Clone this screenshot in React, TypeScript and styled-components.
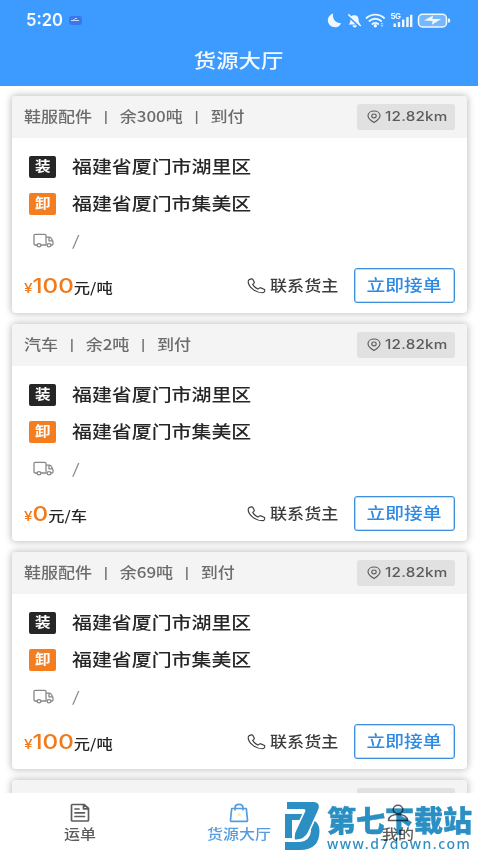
import React from "react";
import styled, { createGlobalStyle } from "styled-components";

const GlobalStyle = createGlobalStyle`
  * { box-sizing: border-box; }
  body { margin: 0; background: #fff; font-family: "Noto Sans CJK SC", sans-serif; }
`;

const Screen = styled.div`
  position: relative;
  width: 478px;
  height: 850px;
  overflow: hidden;
  display: flex;
  flex-direction: column;
  background: #fff;
`;

const Wide = styled.span<{ $size: number; $x?: number; $weight?: number; $origin?: string; $space?: number }>`
  display: inline-block;
  white-space: nowrap;
  font-size: ${(p) => p.$size}px;
  font-weight: ${(p) => p.$weight ?? 400};
  line-height: 1;
  letter-spacing: ${(p) => p.$space ?? 0}px;
  transform: scaleX(${(p) => p.$x ?? 1.15});
  transform-origin: ${(p) => p.$origin ?? "left"} center;
`;

const Header = styled.header`
  flex: none;
  height: 86px;
  background: #3d9aff;
  color: #f4faff;
`;
const StatusBar = styled.div`
  height: 39px;
  padding: 0 27px 0 26px;
  display: flex;
  align-items: center;
  justify-content: space-between;
`;
const Clock = styled.div`
  display: flex;
  align-items: center;
  gap: 4px;
  font-family: Inter, sans-serif;
`;
const UsbChip = styled.span`
  width: 13px;
  height: 9px;
  margin-top: 1px;
  border-radius: 3px;
  background: #3b76ec;
  display: flex;
  svg { display: block; }
`;
const Title = styled.h1`
  margin: 0;
  height: 42px;
  display: flex;
  align-items: center;
  justify-content: center;
`;

const List = styled.main`
  flex: 1;
  min-height: 0;
  overflow: hidden;
  padding: 10px 11px 0 12px;
  display: flex;
  flex-direction: column;
  gap: 11px;
`;
const Card = styled.article`
  flex: none;
  height: 217px;
  border-radius: 4px;
  background: #fff;
  box-shadow: 0 0 7px 1px rgba(0, 0, 0, 0.25);
`;
const CardHead = styled.div`
  height: 42px;
  padding: 0 12px;
  border-radius: 4px 4px 0 0;
  background: #f4f4f4;
  color: #6c6c6c;
  display: flex;
  align-items: center;
  justify-content: space-between;
  > span { margin-top: -1px; }
`;
const Divider = styled.i`
  display: inline-block;
  width: 24px;
  text-align: center;
  font: 600 13px/1 "Noto Sans", sans-serif;
  vertical-align: 1px;
  &::before { content: "|"; }
`;
const Distance = styled.div`
  width: 98px;
  height: 26px;
  padding-left: 10px;
  border-radius: 3px;
  background: #e1e1e1;
  color: #5c5c5c;
  display: flex;
  align-items: center;
  gap: 4px;
  font-family: Inter, sans-serif;
`;
const Stops = styled.div`
  padding: 10px 0 0 17px;
`;
const Stop = styled.div`
  height: 37px;
  display: flex;
  align-items: center;
  gap: 16px;
  color: #262626;
  > span:last-child { margin-top: -2px; }
`;
const Badge = styled.span<{ $color: string }>`
  width: 27px;
  height: 22px;
  border-radius: 2px;
  background: ${(p) => p.$color};
  color: #fff;
  display: flex;
  align-items: center;
  justify-content: center;
  padding-bottom: 1px;
`;
const Vehicle = styled(Stop)`
  padding-left: 4px;
  gap: 18px;
  color: #888;
`;
const Foot = styled.div`
  height: 35px;
  margin-top: 9px;
  padding: 0 12px;
  display: flex;
  align-items: center;
`;
const Price = styled.div`
  flex: 1;
  white-space: nowrap;
  color: #f07a1c;
  small { font: 500 13px Inter, sans-serif; }
  b { font: 500 20.5px Inter, sans-serif; }
  em { font-style: normal; font-size: 13.8px; font-weight: 500; color: #262626; }
`;
const Contact = styled.div`
  width: 107px;
  display: flex;
  align-items: center;
  gap: 4px;
  color: #3c3c3c;
  > span { margin-top: -2px; }
`;
const Accept = styled.button`
  width: 101px;
  height: 35px;
  padding: 0;
  border: 1.5px solid #3d8fdc;
  border-radius: 3px;
  box-shadow: inset 0 0 0 0.6px #8dbdea;
  background: #fff;
  color: #2f8ae2;
  font-family: inherit;
`;

const TabBar = styled.nav`
  flex: none;
  height: 57px;
  background: #fff;
  display: grid;
  grid-template-columns: repeat(3, 1fr);
`;
const Tab = styled.div<{ $active?: boolean }>`
  padding-top: 10px;
  display: flex;
  flex-direction: column;
  align-items: center;
  gap: 3px;
  color: ${(p) => (p.$active ? "#559bdf" : "#5c5c5c")};
  svg { display: block; }
`;

const Watermark = styled.div`
  position: absolute;
  left: 285px;
  top: 802px;
  display: flex;
  gap: 7px;
  color: #2b8fc3;
  mix-blend-mode: multiply;
`;
const SiteText = styled.div`
  width: 145px;
  display: flex;
  flex-direction: column;
`;
const SiteName = styled.div`
  height: 36px;
  line-height: 34px;
  font-size: 29px;
  font-weight: 900;
  white-space: nowrap;
  -webkit-text-stroke: 0.4px currentColor;
`;
const SiteUrl = styled.div`
  font: 500 14px/12px "Noto Sans", sans-serif;
  letter-spacing: 1.5px;
  white-space: nowrap;
`;

const StatusIcons = () => (
  <svg width="125" height="18" viewBox="0 0 125 18" fill="#eef8ff">
    <path d="M7.300 2.500a7 7 0 1 0 8 9.600A7.500 7.500 0 0 1 7.300 2.500Z" />
    <path d="M22.500 13.500c1.900-1.600 1.800-3.200 2-5.600.2-2.300 1.300-3.300 3.200-3.600 3.100-.4 4.700 1.300 4.800 3.700.1 2.700.7 4.200 2 5.500ZM26.500 14.300h4.400a2.200 2.200 0 0 1-4.400 0Z" />
    <path d="M21.500 4.500 34 16" stroke="#3d9aff" strokeWidth="2" />
    <path d="M22.300 3.400 34.800 15" stroke="#eef8ff" strokeWidth="1.500" />
    <g fill="none" stroke="#eef8ff" strokeWidth="1.800" strokeLinecap="round">
      <path d="M40.500 7a13 13 0 0 1 17.600 0M43.400 10a8.800 8.800 0 0 1 11.800 0M46.400 13a4.600 4.600 0 0 1 5.800 0" />
    </g>
    <circle cx="49.300" cy="14.800" r="1.700" />
    <path d="m54.500 13.200 1.500-1.800 1.500 1.800Zm0 1 1.500 1.800 1.500-1.800Z" opacity=".75" />
    <text x="64.500" y="8.300" fontFamily="Inter" fontSize="8" fontWeight="700" textLength="10.500">5G</text>
    <path d="M67.500 12.500h2.400V16h-2.400ZM71.800 11h2.400v5h-2.400ZM76 8.500h2.400V16H76ZM80.200 6h2.500v10h-2.500ZM84 3.800h2.400V16H84Z" />
    <rect x="92.500" y="3.300" width="28" height="12.600" rx="4" fill="#77b8fc" stroke="#eef8ff" strokeWidth="1.500" />
    <path d="M122 7.500h1.700q1.300 1.800 0 4H122ZM98 9.400l9-4.800-.6 3.400h8.700l-9.200 5.800.7-3.800Z" />
  </svg>
);

const PinIcon = () => (
  <svg width="14" height="14" viewBox="0 0 14 14" fill="none" stroke="currentColor" strokeWidth="1.150">
    <path d="M7 12.500C4 10.800 1 8.700 1 5.800 1 3 3.600 1 7 1s6 2 6 4.800c0 2.900-3 5-6 6.700Z" />
    <ellipse cx="7" cy="5.900" rx="2.200" ry="1.900" />
  </svg>
);
const TruckIcon = () => (
  <svg width="21" height="15" viewBox="0 0 21 15" fill="none" stroke="currentColor" strokeWidth="1.300" strokeLinejoin="round">
    <path d="M4 12H2.200Q1 12 1 10.800V2.500Q1 1.300 2.200 1.300h9.600Q13 1.300 13 2.500V12H8M13 4.100h3.400q1.300 0 1.900 1.200l1.200 2.200q.5.800.5 1.700v1.700q0 1.100-1.200 1.100H18M16 4.300v3.600h3.600" />
    <ellipse cx="6" cy="12.300" rx="1.900" ry="1.600" />
    <ellipse cx="16" cy="12.300" rx="1.900" ry="1.600" />
  </svg>
);
const PhoneIcon = () => (
  <svg width="19" height="16" viewBox="0 0 19 16" fill="none" stroke="currentColor" strokeWidth="1.150" strokeLinejoin="round">
    <path d="M2.700 1.400 4.500.9q.9-.2 1.400.6l1.300 2.600q.3.700-.3 1.200L5.700 6.400q1.800 3.100 5.200 4.700l1.600-1.100q.6-.4 1.300-.1l3.200 1.400q.9.400.7 1.200l-.4 1.200q-.4 1-1.800 1C7.800 14.600 1 8.400 1.200 3.200Q1.300 1.900 2.700 1.400Z" />
  </svg>
);
const OrderIcon = () => (
  <svg width="20" height="20" viewBox="0 0 20 20" fill="none" stroke="currentColor" strokeWidth="1.700" strokeLinejoin="round" strokeLinecap="round">
    <path d="M2.500 1.500h11.500l4.500 4v11.500q0 1-1 1h-15q-1 0-1-1v-14.500q0-1 1-1ZM13.500 1.800v4h4.500M5 6h4M5 9.800h9.500M5 13.500h9.500" />
  </svg>
);
const BagIcon = () => (
  <svg width="20" height="20" viewBox="0 0 20 20" fill="none" stroke="currentColor" strokeWidth="1.700" strokeLinejoin="round">
    <path d="M2.700 5.500h14.600l1.200 11.500q.1 1.400-1.300 1.400H2.800q-1.400 0-1.300-1.400ZM6 7.500V5q0-3.700 4-3.700T14 5v2.500" />
    <circle cx="10" cy="11.500" r="1.500" fill="#ffe9b8" stroke="none" />
  </svg>
);
const PersonIcon = () => (
  <svg width="22" height="20" viewBox="0 0 22 20" fill="none" stroke="currentColor" strokeWidth="1.500">
    <ellipse cx="11" cy="6.500" rx="4.800" ry="4.300" />
    <path d="M1.500 17.500c.3-4 4.200-6 9.500-6s9.200 2 9.500 6Z" />
  </svg>
);
const SiteLogo = () => (
  <svg width="35" height="48" viewBox="0 0 35 48" fill="currentColor">
    <path d="M0 12h20v6H7v18H0Z" />
    <path d="M23 17Q34.500 18 34.500 29 34.500 48 15 48H0v-8h15q10-1 11-11 0-5-5-7Z" />
    <path
      d="M2 0H29Q36 1 33 8L23 30Q19 38 10 37.500 9 32 12 27L20 10Q21.500 7 18 7H2Z"
      stroke="#fff"
      strokeWidth="3.200"
      paintOrder="stroke"
    />
  </svg>
);

type Load = { goods: string; left: string; price: string; unit: string };
const loads: Load[] = [
  { goods: "鞋服配件", left: "余300吨", price: "100", unit: "吨" },
  { goods: "汽车", left: "余2吨", price: "0", unit: "车" },
  { goods: "鞋服配件", left: "余69吨", price: "100", unit: "吨" },
  { goods: "鞋服配件", left: "余300吨", price: "100", unit: "吨" },
];

const LoadCard = ({ goods, left, price, unit }: Load) => (
  <Card>
    <CardHead>
      <Wide $size={14.8} $weight={500}>
        {goods}<Divider />{left}<Divider />到付
      </Wide>
      <Distance>
        <PinIcon />
        <Wide $size={12.8} $x={1.19} $weight={500} $space={0.2}>12.82km</Wide>
      </Distance>
    </CardHead>
    <Stops>
      <Stop>
        <Badge $color="#262626"><Wide $size={13.5} $weight={700} $origin="center">装</Wide></Badge>
        <Wide $size={17.4} $weight={500} $x={1.145}>福建省厦门市湖里区</Wide>
      </Stop>
      <Stop>
        <Badge $color="#f47d20"><Wide $size={13.5} $weight={700} $origin="center">卸</Wide></Badge>
        <Wide $size={17.4} $weight={500} $x={1.145}>福建省厦门市集美区</Wide>
      </Stop>
      <Vehicle>
        <TruckIcon />
        <Wide $size={14} $x={1.4}>/</Wide>
      </Vehicle>
    </Stops>
    <Foot>
      <Price>
        <Wide $size={13} $x={1.18}><small>¥</small><b>{price}</b><em>元/{unit}</em></Wide>
      </Price>
      <Contact>
        <PhoneIcon />
        <Wide $size={15} $x={1.14} $weight={500}>联系货主</Wide>
      </Contact>
      <Accept><Wide $size={16} $x={1.17} $weight={500} $origin="center">立即接单</Wide></Accept>
    </Foot>
  </Card>
);

export default function App() {
  return (
    <Screen>
      <GlobalStyle />
      <Header>
        <StatusBar>
          <Clock>
            <Wide $size={17.5} $weight={600} $x={0.95}>5:20</Wide>
            <UsbChip>
              <svg width="13" height="9" viewBox="0 0 13 9" stroke="#bfe0ff" fill="none">
                <path d="M2 4.500h8M4 4.500l2-2h2" />
              </svg>
            </UsbChip>
          </Clock>
          <StatusIcons />
        </StatusBar>
        <Title><Wide $size={18.8} $x={1.19} $weight={500} $origin="center">货源大厅</Wide></Title>
      </Header>
      <List>
        {loads.map((load, i) => <LoadCard key={i} {...load} />)}
      </List>
      <TabBar>
        <Tab><OrderIcon /><Wide $size={14} $x={1.14} $weight={500} $origin="center">运单</Wide></Tab>
        <Tab $active><BagIcon /><Wide $size={14} $x={1.14} $weight={500} $origin="center">货源大厅</Wide></Tab>
        <Tab><PersonIcon /><Wide $size={14} $x={1.14} $weight={500} $origin="center">我的</Wide></Tab>
      </TabBar>
      <Watermark>
        <SiteLogo />
        <SiteText>
          <SiteName>第七下载站</SiteName>
          <SiteUrl>www.d7down.com</SiteUrl>
        </SiteText>
      </Watermark>
    </Screen>
  );
}
